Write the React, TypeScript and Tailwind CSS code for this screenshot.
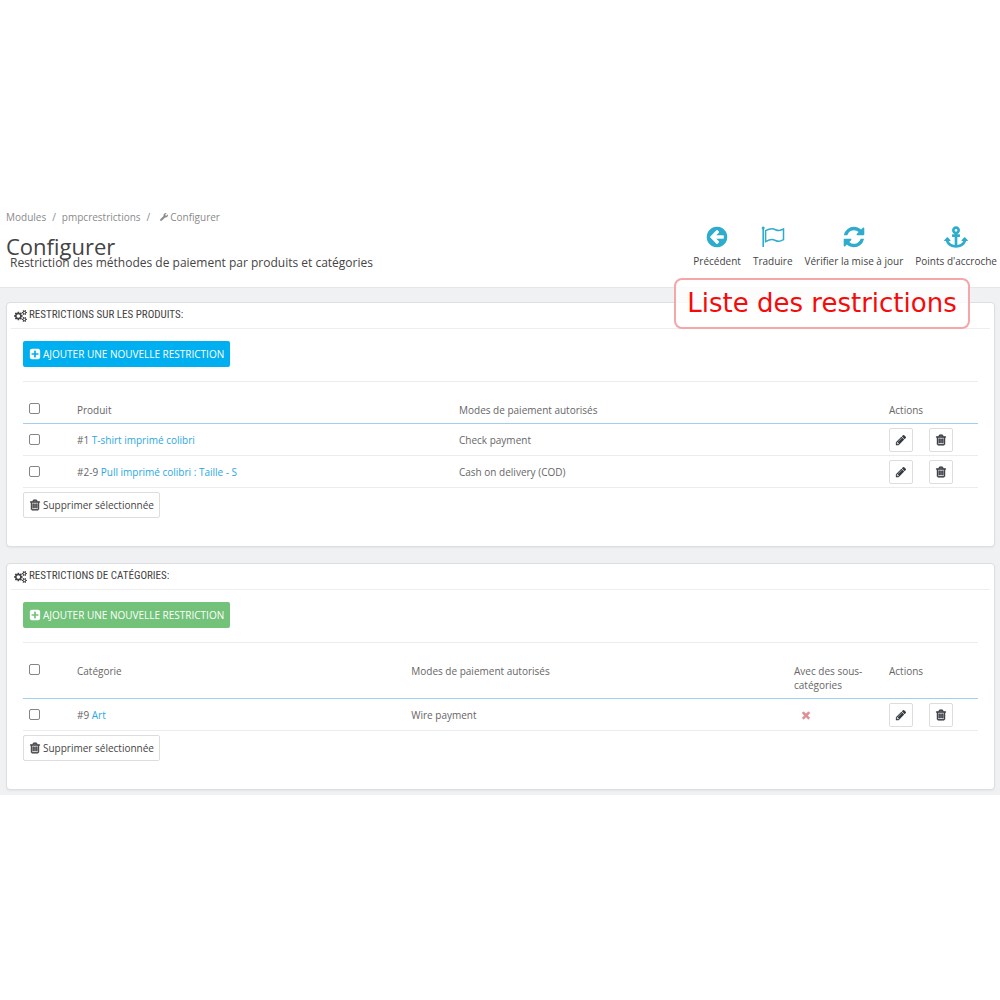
import type { ReactNode } from "react";
import { FaAnchor, FaWrench } from "react-icons/fa";

const ICONS = {
  back: "M1408 960v-128q0-26-19-45t-45-19h-502l189-189q19-19 19-45t-19-45l-91-91q-18-18-45-18t-45 18l-362 362-91 91q-18 18-18 45t18 45l91 91 362 362q18 18 45 18t45-18l91-91q18-18 18-45t-18-45l-189-189h502q26 0 45-19t19-45zm256-64q0 209-103 385.5t-279.5 279.5-385.5 103-385.5-103-279.5-279.5-103-385.5 103-385.5 279.5-279.5 385.5-103 385.5 103 279.5 279.5 103 385.5z",
  refresh:
    "M1639 1056q0 5-1 7-64 268-268 434.5t-478 166.5q-146 0-282.5-55t-243.5-157l-129 129q-19 19-45 19t-45-19-19-45v-448q0-26 19-45t45-19h448q26 0 45 19t19 45-19 45l-137 137q71 66 161 102t187 36q134 0 250-65t186-179q11-17 53-117 8-23 30-23h192q13 0 22.5 9.5t9.5 22.5zm25-800v448q0 26-19 45t-45 19h-448q-26 0-45-19t-19-45 19-45l138-138q-148-137-349-137-134 0-250 65t-186 179q-11 17-53 117-8 23-30 23h-199q-13 0-22.5-9.5t-9.5-22.5v-7q65-268 270-434.5t480-166.5q146 0 284 55.5t245 156.5l130-129q19-19 45-19t45 19 19 45z",
  plus: "M1408 960v-128q0-26-19-45t-45-19h-320v-320q0-26-19-45t-45-19h-128q-26 0-45 19t-19 45v320h-320q-26 0-45 19t-19 45v128q0 26 19 45t45 19h320v320q0 26 19 45t45 19h128q26 0 45-19t19-45v-320h320q26 0 45-19t19-45zm256-544v960q0 119-84.5 203.5t-203.5 84.5h-960q-119 0-203.5-84.5t-84.5-203.5v-960q0-119 84.5-203.5t203.5-84.5h960q119 0 203.5 84.5t84.5 203.5z",
  pencil:
    "M491 1536l91-91-235-235-91 91v107h128v128h107zm523-928q0-22-22-22-10 0-17 7l-542 542q-7 7-7 17 0 22 22 22 10 0 17-7l542-542q7-7 7-17zm-54-192l416 416-832 832h-416v-416zm683 96q0 53-37 90l-166 166-416-416 166-165q36-38 90-38 53 0 91 38l235 234q37 39 37 91z",
  trash:
    "M704 736v576q0 14-9 23t-23 9h-64q-14 0-23-9t-9-23v-576q0-14 9-23t23-9h64q14 0 23 9t9 23zm256 0v576q0 14-9 23t-23 9h-64q-14 0-23-9t-9-23v-576q0-14 9-23t23-9h64q14 0 23 9t9 23zm256 0v576q0 14-9 23t-23 9h-64q-14 0-23-9t-9-23v-576q0-14 9-23t23-9h64q14 0 23 9t9 23zm128 724v-948h-896v948q0 22 7 40.5t14.5 27 10.5 8.5h832q3 0 10.5-8.5t14.5-27 7-40.5zm-672-1076h448l-48-117q-7-9-17-11h-317q-10 2-17 11zm928 32v64q0 14-9 23t-23 9h-96v948q0 83-47 143.5t-113 60.5h-832q-66 0-113-58.5t-47-141.5v-952h-96q-14 0-23-9t-9-23v-64q0-14 9-23t23-9h309l70-167q15-37 54-63t79-26h320q40 0 79 26t54 63l70 167h309q14 0 23 9t9 23z",
  times:
    "M1490 1322q0 40-28 68l-136 136q-28 28-68 28t-68-28l-294-294-294 294q-28 28-68 28t-68-28l-136-136q-28-28-28-68t28-68l294-294-294-294q-28-28-28-68t28-68l136-136q28-28 68-28t68 28l294 294 294-294q28-28 68-28t68 28l136 136q28 28 28 68t-28 68l-294 294 294 294q28 28 28 68z",
};

function Icon({ name, className }: { name: keyof typeof ICONS; className: string }) {
  return (
    <svg
      viewBox="0 0 1792 1792"
      fill="currentColor"
      stroke="currentColor"
      strokeWidth={name === "trash" ? 90 : 0}
      className={className}
      aria-hidden="true"
    >
      <path d={ICONS[name]} />
    </svg>
  );
}

function CogsIcon() {
  return (
    <svg viewBox="0 0 1920 1792" fill="currentColor" className="h-3 w-[13px]" aria-hidden="true">
      <path d="M896 896q0-106-75-181t-181-75-181 75-75 181 75 181 181 75 181-75 75-181zm768 512q0-52-38-90t-90-38-90 38-38 90q0 53 37.5 90.5t90.5 37.5 90.5-37.5 37.5-90.5zm0-1024q0-52-38-90t-90-38-90 38-38 90q0 53 37.5 90.5t90.5 37.5 90.5-37.5 37.5-90.5zm-384 421v185q0 10-7 19.5t-16 10.5l-155 24q-11 35-32 76 34 48 90 115 7 11 7 20 0 12-7 19-23 30-82.5 89.5t-78.5 59.5q-11 0-21-7l-115-90q-37 19-77 31-11 108-23 155-7 24-30 24h-186q-11 0-20-7.5t-10-17.5l-23-153q-34-10-75-31l-118 89q-7 7-20 7-11 0-21-8-144-133-144-160 0-9 7-19 10-14 41-53t47-61q-23-44-35-82l-152-24q-10-1-17-9.5t-7-19.5v-185q0-10 7-19.5t16-10.5l155-24q11-35 32-76-34-48-90-115-7-11-7-20 0-12 7-20 22-30 82-89t79-59q11 0 21 7l115 90q34-18 77-32 11-108 23-154 7-24 30-24h186q11 0 20 7.5t10 17.5l23 153q34 10 75 31l118-89q8-7 20-7 11 0 21 8 144 133 144 160 0 8-7 19-12 16-42 54t-45 60q23 48 34 82l152 23q10 2 17 10.5t7 19.5zm640 533v140q0 16-149 31-12 27-30 52 51 113 51 138 0 4-4 7-122 71-124 71-8 0-46-47t-52-68q-20 2-30 2t-30-2q-14 21-52 68t-46 47q-2 0-124-71-4-3-4-7 0-25 51-138-18-25-30-52-149-15-149-31v-140q0-16 149-31 13-29 30-52-51-113-51-138 0-4 4-7 4-2 35-20t59-34 30-16q8 0 46 46.5t52 67.5q20-2 30-2t30 2q51-71 92-112l6-2q4 0 124 70 4 3 4 7 0 25-51 138 17 23 30 52 149 15 149 31zm0-1024v140q0 16-149 31-12 27-30 52 51 113 51 138 0 4-4 7-122 71-124 71-8 0-46-47t-52-68q-20 2-30 2t-30-2q-14 21-52 68t-46 47q-2 0-124-71-4-3-4-7 0-25 51-138-18-25-30-52-149-15-149-31v-140q0-16 149-31 13-29 30-52-51-113-51-138 0-4 4-7 4-2 35-20t59-34 30-16q8 0 46 46.5t52 67.5q20-2 30-2t30 2q51-71 92-112l6-2q4 0 124 70 4 3 4 7 0 25-51 138 17 23 30 52 149 15 149 31z" />
    </svg>
  );
}

function FlagIcon() {
  return (
    <svg viewBox="0 0 24 24" fill="none" stroke="currentColor" className="size-6" aria-hidden="true">
      <circle cx="2.2" cy="3" r="1.5" fill="currentColor" stroke="none" />
      <path d="M2.2 3v19" strokeWidth="1.6" />
      <path
        d="M4.6 5.7C7 4.4 9 3.6 11 3.7c2.8.1 4.2 1.9 6.500 1.9 1.700 0 3.300-.9 5-1.700v10.800c-1.600.9-3.300 1.600-5 1.600-2.400 0-3.900-1.700-6.500-1.700-2.100 0-4.200.9-6.400 2.100z"
        strokeWidth="1.5"
      />
    </svg>
  );
}

function ToolbarLink({ label, children }: { label: string; children: ReactNode }) {
  return (
    <a href="#" className="flex flex-col items-center gap-1">
      <span className="flex h-6 items-center text-[#2eacce]">{children}</span>
      <span className="text-[10px] leading-4 whitespace-nowrap">{label}</span>
    </a>
  );
}

function Panel({
  title,
  addColor,
  children,
}: {
  title: string;
  addColor: string;
  children: ReactNode;
}) {
  return (
    <section className="rounded border border-[#dcdfe1] bg-white pb-7 shadow-xs">
      <h2 className="mx-1 flex h-[26px] items-center gap-[2px] border-b border-[#eeeeee] pl-[3px] font-['Liberation_Sans_Narrow','Roboto_Condensed',sans-serif] text-[11px] uppercase">
        <CogsIcon />
        {title}
      </h2>
      <div className="px-4 pt-3">
        <button
          type="button"
          className={`flex h-[26px] items-center gap-[2px] rounded-xs px-[6px] text-[10px] text-white uppercase ${addColor}`}
        >
          <Icon name="plus" className="size-3" />
          Ajouter une nouvelle restriction
        </button>
        <hr className="mt-[14px] border-[#eaedef]" />
        {children}
        <button
          type="button"
          className="mt-1 flex h-[26px] items-center gap-[2px] rounded-xs border border-[#dddddd] px-[5px] text-[10px]"
        >
          <Icon name="trash" className="size-3" />
          Supprimer sélectionnée
        </button>
      </div>
    </section>
  );
}

function Check({ label }: { label: string }) {
  return (
    <input
      type="checkbox"
      aria-label={label}
      className="ml-[6px] block size-[11px] appearance-none rounded-xs border border-[#858585] bg-white checked:bg-[#00aff0]"
    />
  );
}

function RowActions() {
  return (
    <div className="flex gap-4">
      <button
        type="button"
        aria-label="Modifier"
        className="flex size-6 items-center justify-center rounded-xs border border-[#dddddd] text-[#363a41]"
      >
        <Icon name="pencil" className="size-3" />
      </button>
      <button
        type="button"
        aria-label="Supprimer"
        className="flex size-6 items-center justify-center rounded-xs border border-[#dddddd] text-[#363a41]"
      >
        <Icon name="trash" className="size-3" />
      </button>
    </div>
  );
}

const tableClass =
  "w-full table-fixed text-left text-[10px] leading-[14px] text-[#666666] [&_th]:pt-[21px] [&_th]:pb-[6px] [&_th]:align-top [&_th]:font-normal [&_thead_tr]:border-b [&_thead_tr]:border-[#a0d0eb] [&_tbody_tr]:h-8 [&_tbody_tr]:border-b [&_tbody_tr]:border-[#eaedef]";

const products = [
  { id: "#1", name: "T-shirt imprimé colibri", payment: "Check payment" },
  { id: "#2-9", name: "Pull imprimé colibri : Taille - S", payment: "Cash on delivery (COD)" },
];

const categories = [{ id: "#9", name: "Art", payment: "Wire payment" }];

export default function App() {
  return (
    <main className="min-h-screen bg-white pt-[208px] font-['Open_Sans',sans-serif] text-[#444444]">
      <header className="flex items-start justify-between pr-[3px] pb-[17px] pl-[6px]">
        <div>
          <nav className="flex items-center gap-[6px] text-[10px] leading-[18px] text-[#8a8a8a]">
            <a href="#">Modules</a>
            <span>/</span>
            <a href="#">pmpcrestrictions</a>
            <span>/</span>
            <a href="#" className="ml-1 flex items-center gap-[2px]">
              <FaWrench className="size-2" />
              Configurer
            </a>
          </nav>
          <h1 className="mt-[10px] text-[22px] leading-5">Configurer</h1>
          <p className="pl-1 text-xs leading-[14px]">
            Restriction des méthodes de paiement par produits et catégories
          </p>
        </div>
        <div className="flex gap-3 pt-[17px]">
          <ToolbarLink label="Précédent">
            <Icon name="back" className="size-6" />
          </ToolbarLink>
          <ToolbarLink label="Traduire">
            <FlagIcon />
          </ToolbarLink>
          <ToolbarLink label="Vérifier la mise à jour">
            <Icon name="refresh" className="size-6" />
          </ToolbarLink>
          <ToolbarLink label="Points d'accroche">
            <FaAnchor className="size-6" />
          </ToolbarLink>
        </div>
      </header>

      <div className="relative flex flex-col gap-4 border-t border-[#e4e6e8] bg-[#eff1f2] pt-[14px] pr-[5px] pb-[5px] pl-[6px]">
        <Panel title="Restrictions sur les produits:" addColor="bg-[#00aff0]">
          <table className={tableClass}>
            <thead>
              <tr>
                <th className="w-[54px]">
                  <Check label="Tous les produits" />
                </th>
                <th className="w-[40%]">Produit</th>
                <th>Modes de paiement autorisés</th>
                <th className="w-[89px]">Actions</th>
              </tr>
            </thead>
            <tbody>
              {products.map((product) => (
                <tr key={product.id}>
                  <td>
                    <Check label={product.name} />
                  </td>
                  <td>
                    {product.id}{" "}
                    <a href="#" className="text-[#2ba8e3]">
                      {product.name}
                    </a>
                  </td>
                  <td>{product.payment}</td>
                  <td>
                    <RowActions />
                  </td>
                </tr>
              ))}
            </tbody>
          </table>
        </Panel>

        <Panel title="Restrictions de catégories:" addColor="bg-[#72c279]">
          <table className={tableClass}>
            <thead>
              <tr>
                <th className="w-[54px]">
                  <Check label="Toutes les catégories" />
                </th>
                <th className="w-[35%]">Catégorie</th>
                <th>Modes de paiement autorisés</th>
                <th className="w-[95px] pr-4">Avec des sous-catégories</th>
                <th className="w-[89px]">Actions</th>
              </tr>
            </thead>
            <tbody>
              {categories.map((category) => (
                <tr key={category.id}>
                  <td>
                    <Check label={category.name} />
                  </td>
                  <td>
                    {category.id}{" "}
                    <a href="#" className="text-[#2ba8e3]">
                      {category.name}
                    </a>
                  </td>
                  <td>{category.payment}</td>
                  <td>
                    <Icon name="times" className="ml-[6px] size-3 text-[#e08f95]" />
                  </td>
                  <td>
                    <RowActions />
                  </td>
                </tr>
              ))}
            </tbody>
          </table>
        </Panel>

        <div className="absolute -top-[10px] right-[30px] flex h-[51px] w-[296px] items-center justify-center rounded-lg border-2 border-[#f4a6a9] bg-white/80 font-['DejaVu_Sans',sans-serif] text-[26px] whitespace-nowrap text-[#f60a0a]">
          Liste des restrictions
        </div>
      </div>
    </main>
  );
}
